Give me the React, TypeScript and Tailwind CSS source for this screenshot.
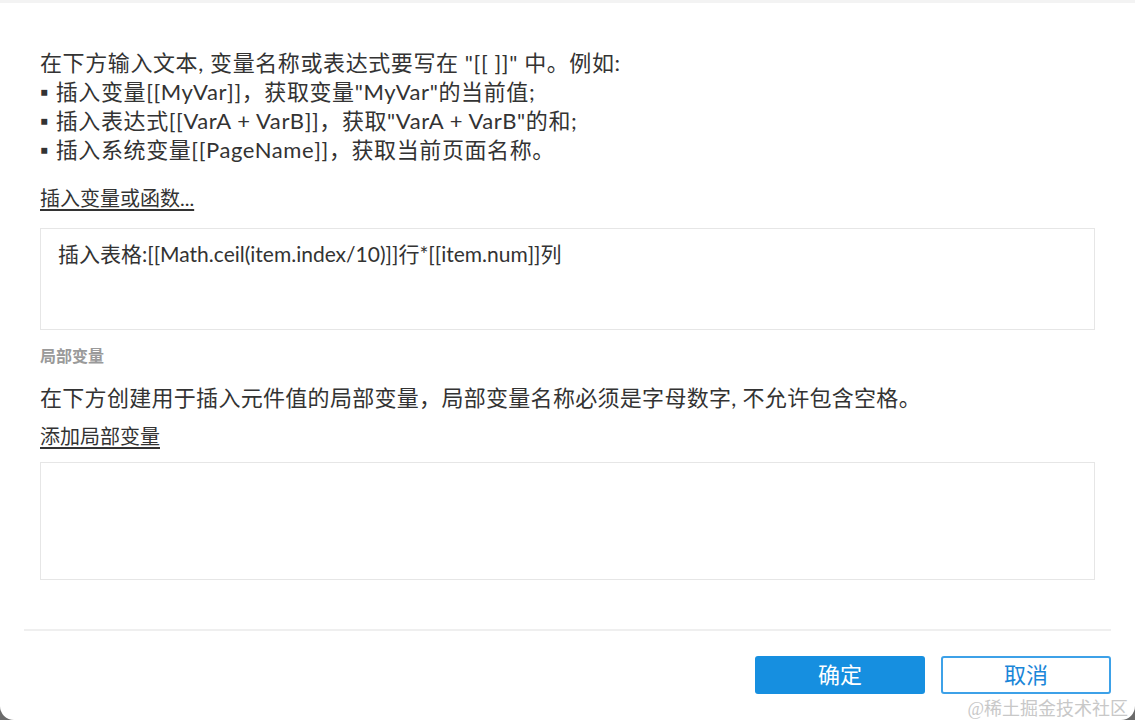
import React from "react";

const font = { fontFamily: '"Lato", "Noto Sans CJK SC", sans-serif' };

export default function App() {
  return (
    <div className="w-[1135px] h-[720px] bg-[#6b6b6b] overflow-hidden relative">
      <div
        className="w-[1135px] h-[720px] bg-white rounded-b-[14px] flex flex-col text-[#333333]"
        style={font}
      >
        <div className="h-[3px] bg-[#f3f3f3]" />
        <div className="px-[40px] pt-[45px] flex flex-col">
          <div className="text-[22px] leading-[29px] tracking-[0.6px]">
            <div>在下方输入文本, 变量名称或表达式要写在 "[[ ]]" 中。例如:</div>
            <div>▪ 插入变量[[MyVar]]，获取变量"MyVar"的当前值;</div>
            <div>▪ 插入表达式[[VarA + VarB]]，获取"VarA + VarB"的和;</div>
            <div>▪ 插入系统变量[[PageName]]，获取当前页面名称。</div>
          </div>
          <div className="mt-[22px] text-[20px] leading-[24px] underline underline-offset-[3px]">
            插入变量或函数...
          </div>
          <div className="mt-[18px] h-[102px] border border-[#e6e6e6] px-[17px] pt-[11px] text-[21px] leading-[28px]">
            插入表格:[[Math.ceil(item.index/10)]]行*[[item.num]]列
          </div>
          <div className="mt-[16px] text-[16px] leading-[20px] text-[#9a9a9a] font-bold">
            局部变量
          </div>
          <div className="mt-[18px] text-[22px] leading-[28px] tracking-[0.3px]">
            在下方创建用于插入元件值的局部变量，局部变量名称必须是字母数字, 不允许包含空格。
          </div>
          <div className="mt-[12px] text-[20px] leading-[24px] underline underline-offset-[3px]">
            添加局部变量
          </div>
          <div className="mt-[14px] h-[118px] border border-[#e6e6e6]" />
        </div>
        <div className="mx-[24px] mt-[49px] h-[2px] bg-[#efefef]" />
        <div className="flex justify-end gap-[16px] pr-[24px] pt-[25px]">
          <button className="w-[170px] h-[38px] rounded-[3px] bg-[#168fe0] text-white text-[22px] leading-none">
            确定
          </button>
          <button className="w-[170px] h-[38px] rounded-[3px] border-2 border-[#3da1e8] bg-white text-[#1a86d8] text-[22px] leading-none">
            取消
          </button>
        </div>
      </div>
      <div
        className="absolute right-[7px] bottom-[1px] text-[18px] leading-[20px] text-[#c8c8c8]"
        style={{ fontFamily: '"Liberation Serif", "Noto Sans CJK SC", serif' }}
      >
        @稀土掘金技术社区
      </div>
    </div>
  );
}
